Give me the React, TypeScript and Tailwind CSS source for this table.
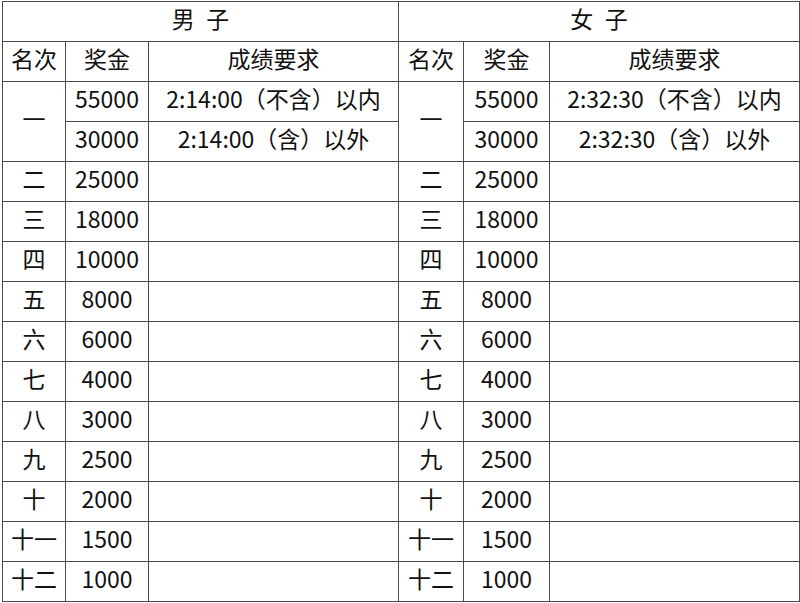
const ranks = ["二", "三", "四", "五", "六", "七", "八", "九", "十", "十一", "十二"];
const prizes = ["25000", "18000", "10000", "8000", "6000", "4000", "3000", "2500", "2000", "1500", "1000"];

const td = "border border-[#4a4a4a] h-[40px] p-0 pb-[7px] text-center align-middle";

export default function App() {
  return (
    <div className="bg-white w-[800px] h-[603px] pt-[1px] pl-[2px]" style={{ fontFamily: '"Noto Sans CJK SC", "Noto Sans", sans-serif' }}>
      <table className="border-collapse table-fixed w-[797px] text-[23px] text-[#111] leading-none">
        <colgroup>
          <col className="w-[63px]" />
          <col className="w-[83px]" />
          <col className="w-[250px]" />
          <col className="w-[65px]" />
          <col className="w-[86px]" />
          <col className="w-[250px]" />
        </colgroup>
        <tbody>
          <tr>
            <td colSpan={3} className={td}>男{"\u2002"}子</td>
            <td colSpan={3} className={td}>女{"\u2002"}子</td>
          </tr>
          <tr>
            <td className={td}>名次</td>
            <td className={td}>奖金</td>
            <td className={td}>成绩要求</td>
            <td className={td}>名次</td>
            <td className={td}>奖金</td>
            <td className={td}>成绩要求</td>
          </tr>
          <tr>
            <td rowSpan={2} className={td}>一</td>
            <td className={td}>55000</td>
            <td className={td}>2:14:00（不含）以内</td>
            <td rowSpan={2} className={td}>一</td>
            <td className={td}>55000</td>
            <td className={td}>2:32:30（不含）以内</td>
          </tr>
          <tr>
            <td className={td}>30000</td>
            <td className={td}>2:14:00（含）以外</td>
            <td className={td}>30000</td>
            <td className={td}>2:32:30（含）以外</td>
          </tr>
          {ranks.map((r, i) => (
            <tr key={r}>
              <td className={td}>{r}</td>
              <td className={td}>{prizes[i]}</td>
              <td className={td}></td>
              <td className={td}>{r}</td>
              <td className={td}>{prizes[i]}</td>
              <td className={td}></td>
            </tr>
          ))}
        </tbody>
      </table>
    </div>
  );
}
